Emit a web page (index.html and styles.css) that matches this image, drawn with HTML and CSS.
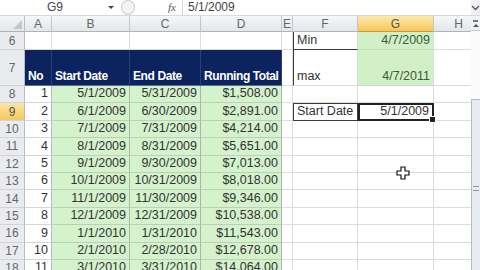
FILE: index.html
```html
<!DOCTYPE html>
<html lang="en">
<head>
    <meta charset="UTF-8">
    <meta name="viewport" content="width=device-width, initial-scale=1.0">
    <title>Running Total</title>
    <link rel="stylesheet" href="styles.css">
</head>
<body>

    <div class="formula-bar">
        <div class="name-box">G9<span class="drop"></span></div>
        <div class="split"><span class="knob"></span></div>
        <div class="fx">fx</div>
        <div class="formula">5/1/2009</div>
        <div class="expand">
            <svg width="9" height="6" viewBox="0 0 9 6"><path d="M1 1l3.5 3.5L8 1" fill="none" stroke="#555" stroke-width="1.3"/></svg>
        </div>
    </div>

    <div class="main">
        <div class="sheet">
            <!-- column headers -->
            <div class="corner"></div>
            <div class="ch">A</div>
            <div class="ch">B</div>
            <div class="ch">C</div>
            <div class="ch">D</div>
            <div class="ch">E</div>
            <div class="ch">F</div>
            <div class="ch sel">G</div>
            <div class="ch">H</div>

            <!-- row 6 -->
            <div class="rh">6</div>
            <div></div><div></div><div></div><div></div><div></div>
            <div class="box-top">Min</div>
            <div class="good num">4/7/2009</div>
            <div></div>

            <!-- row 7 -->
            <div class="rh">7</div>
            <div class="hd">No</div>
            <div class="hd">Start Date</div>
            <div class="hd">End Date</div>
            <div class="hd">Running Total</div>
            <div></div>
            <div class="box-side">max</div>
            <div class="good num">4/7/2011</div>
            <div></div>

            <div class="rh">8</div>
            <div class="no num">1</div>
            <div class="fill num">5/1/2009</div>
            <div class="fill num">5/31/2009</div>
            <div class="fill num">$1,508.00</div>
            <div></div><div></div><div></div><div></div>

            <div class="rh sel">9</div>
            <div class="no num">2</div>
            <div class="fill num">6/1/2009</div>
            <div class="fill num">6/30/2009</div>
            <div class="fill num">$2,891.00</div>
            <div></div>
            <div class="box">Start Date</div>
            <div class="num active">5/1/2009<span class="handle"></span></div>
            <div></div>

            <div class="rh">10</div>
            <div class="no num">3</div>
            <div class="fill num">7/1/2009</div>
            <div class="fill num">7/31/2009</div>
            <div class="fill num">$4,214.00</div>
            <div></div><div></div><div></div><div></div>

            <div class="rh">11</div>
            <div class="no num">4</div>
            <div class="fill num">8/1/2009</div>
            <div class="fill num">8/31/2009</div>
            <div class="fill num">$5,651.00</div>
            <div></div><div></div><div></div><div></div>

            <div class="rh">12</div>
            <div class="no num">5</div>
            <div class="fill num">9/1/2009</div>
            <div class="fill num">9/30/2009</div>
            <div class="fill num">$7,013.00</div>
            <div></div><div></div><div></div><div></div>

            <div class="rh">13</div>
            <div class="no num">6</div>
            <div class="fill num">10/1/2009</div>
            <div class="fill num">10/31/2009</div>
            <div class="fill num">$8,018.00</div>
            <div></div><div></div><div></div><div></div>

            <div class="rh">14</div>
            <div class="no num">7</div>
            <div class="fill num">11/1/2009</div>
            <div class="fill num">11/30/2009</div>
            <div class="fill num">$9,346.00</div>
            <div></div><div></div><div></div><div></div>

            <div class="rh">15</div>
            <div class="no num">8</div>
            <div class="fill num">12/1/2009</div>
            <div class="fill num">12/31/2009</div>
            <div class="fill num">$10,538.00</div>
            <div></div><div></div><div></div><div></div>

            <div class="rh">16</div>
            <div class="no num">9</div>
            <div class="fill num">1/1/2010</div>
            <div class="fill num">1/31/2010</div>
            <div class="fill num">$11,543.00</div>
            <div></div><div></div><div></div><div></div>

            <div class="rh">17</div>
            <div class="no num">10</div>
            <div class="fill num">2/1/2010</div>
            <div class="fill num">2/28/2010</div>
            <div class="fill num">$12,678.00</div>
            <div></div><div></div><div></div><div></div>

            <div class="rh">18</div>
            <div class="no num">11</div>
            <div class="fill num">3/1/2010</div>
            <div class="fill num">3/31/2010</div>
            <div class="fill num">$14,064.00</div>
            <div></div><div></div><div></div><div></div>
        </div>

        <div class="vscroll">
            <div class="splitbox"><span></span><span class="up"></span></div>
            <div class="track"></div>
            <div class="thumb"><span class="grip"></span></div>
        </div>
    </div>

    <svg class="cursor" width="14" height="14" viewBox="0 0 14 14">
        <path d="M5 1h4v4h4v4h-4v4h-4v-4h-4v-4h4z" fill="#fff" stroke="#111" stroke-width="1.2"/>
    </svg>

</body>
</html>
```

FILE: styles.css
```css
body { margin: 0; width: 480px; height: 270px; overflow: hidden; background: #fff; font-family: "Liberation Sans", Arial, sans-serif; font-size: 12px; color: #333; position: relative; }

.formula-bar { display: flex; height: 15px; border-bottom: 1px solid #d6d9dd; align-items: center; line-height: 15px; }
.name-box { width: 118px; box-sizing: border-box; padding-left: 47px; display: flex; align-items: center; color: #444; }
.drop { margin-left: auto; margin-right: 4px; width: 0; height: 0; border-left: 3px solid transparent; border-right: 3px solid transparent; border-top: 3px solid #444; }
.split { width: 50px; height: 15px; position: relative; }
.knob { position: absolute; left: 3px; top: 0px; width: 12px; height: 13px; border-radius: 50%; border: 1px solid #c9cdd2; background: #f3f4f6; }
.fx { width: 15px; height: 15px; box-sizing: border-box; border-right: 1px solid #d3d6da; font-family: "Liberation Serif", serif; font-style: italic; font-size: 11px; color: #555; }
.formula { flex: 1; padding-left: 5px; color: #444; }
.expand { width: 9px; height: 15px; background: #eef0f3; display: flex; align-items: center; justify-content: center; }

.main { display: flex; height: 254px; }
.sheet { width: 471px; overflow: hidden; display: grid; grid-template-columns: 25px 27px 78px 71px 81px 11px 65px 76px 50px; grid-template-rows: 16px 18px 36px repeat(11, 17.4px); }
.sheet > div { box-sizing: border-box; border-right: 1px solid #dadcdd; border-bottom: 1px solid #dadcdd; display: flex; align-items: flex-end; padding: 0 3px 2px; white-space: nowrap; overflow: hidden; line-height: 14px; font-size: 12.5px; }
.sheet > .num { justify-content: flex-end; }

.sheet > .corner { background: linear-gradient(#f4f5f7, #e4e7eb); border-right-color: #b9bdc3; border-bottom-color: #aeb4bb; position: relative; }
.corner::after { content: ""; position: absolute; right: 2px; bottom: 2px; border-left: 9px solid transparent; border-bottom: 9px solid #c3c7cc; }
.sheet > .ch { background: linear-gradient(#f6f7f9, #e3e6ea); border-right-color: #c3c7cd; border-bottom-color: #aeb4bb; justify-content: center; align-items: center; padding: 0; color: #666; font-size: 12px; }
.sheet > .ch.sel { background: linear-gradient(#fde9ab, #f5c85a); border-bottom-color: #c49c3d; color: #555; }
.sheet > .rh { background: #e9ebee; border-right-color: #b9bdc3; border-bottom-color: #d0d4d9; justify-content: center; align-items: center; padding: 0; color: #64666a; font-size: 12px; }
.sheet > .rh.sel { background: linear-gradient(#fbe6a6, #f4c85f); color: #555; }

.sheet > .hd { background: #0c2360; color: #fff; font-weight: bold; font-size: 12px; letter-spacing: -0.4px; border-right-color: #2c4070; border-bottom-color: #5d6e8a; }
.sheet > .no { border-right-color: #b9bcbf; border-bottom-color: #d3d5d7; }
.sheet > .fill { background: #d4f2cc; border-right-color: #a9b8a7; border-bottom-color: #bccfb9; }
.sheet > .good { background: #d1f0c8; color: #3a5a38; border-bottom-color: #c8dcc4; }

.sheet > .box-top { border-left: 1px solid #3a3a3a; border-bottom-color: #3a3a3a; }
.sheet > .box-side { border-left: 1px solid #3a3a3a; }
.sheet > .box { border: 1px solid #3a3a3a; }
.sheet > .active { border: 2px solid #222; overflow: visible; position: relative; padding-bottom: 1px; }
.handle { position: absolute; right: -4px; bottom: -4px; width: 5px; height: 5px; background: #222; border: 1px solid #fff; }

.vscroll { width: 9px; display: flex; flex-direction: column; background: #f0f2f5; }
.splitbox { height: 14px; border-bottom: 1px solid #c5c9ce; display: flex; flex-direction: column; align-items: center; justify-content: center; gap: 2px; }
.splitbox span { width: 5px; height: 2px; border-top: 1px solid #777; border-bottom: 1px solid #777; box-sizing: border-box; }
.splitbox .up { width: 0; height: 0; border: none; border-left: 3px solid transparent; border-right: 3px solid transparent; border-bottom: 3px solid #555; }
.track { height: 68px; background: #fafbfc; }
.thumb { flex: 1; background: #e7eaee; border-left: 1px solid #b8bcc1; border-top: 1px solid #b8bcc1; position: relative; }
.grip { position: absolute; left: 1px; right: 1px; top: 86px; height: 3px; border-top: 1px solid #999; border-bottom: 1px solid #999; }

.cursor { position: absolute; left: 396px; top: 166px; }
```
